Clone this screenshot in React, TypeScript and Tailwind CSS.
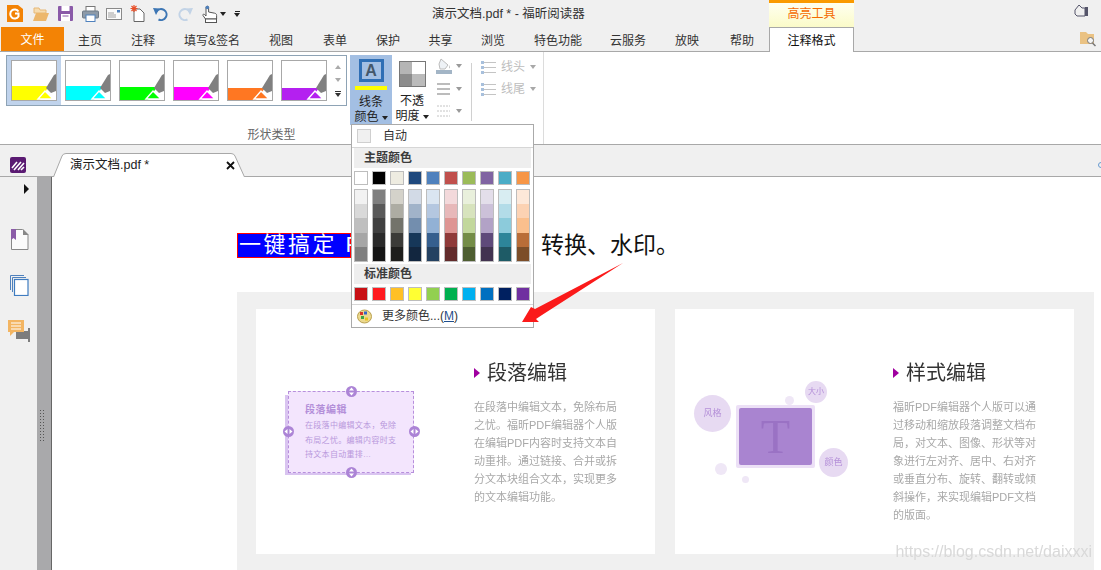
import type { ReactNode } from "react";

const tabs = [
  { label: "主页", w: "w-[52px]" },
  { label: "注释", w: "w-[54px]" },
  { label: "填写&签名", w: "w-[84px]" },
  { label: "视图", w: "w-[54px]" },
  { label: "表单", w: "w-[54px]" },
  { label: "保护", w: "w-[52px]" },
  { label: "共享", w: "w-[53px]" },
  { label: "浏览", w: "w-[52px]" },
  { label: "特色功能", w: "w-[78px]" },
  { label: "云服务", w: "w-[62px]" },
  { label: "放映", w: "w-[56px]" },
  { label: "帮助", w: "w-[54px]" },
];

const thumbs = [
  { color: "#ffff00", top: 25 },
  { color: "#00ffff", top: 25 },
  { color: "#00ff00", top: 26 },
  { color: "#ff00ff", top: 26 },
  { color: "#ff7722", top: 27 },
  { color: "#b420f0", top: 27 },
];

const themeColors = ["#ffffff", "#000000", "#eeece1", "#1f497d", "#4f81bd", "#c0504d", "#9bbb59", "#8064a2", "#4bacc6", "#f79646"];

const ramps = [
  ["#f2f2f2", "#d9d9d9", "#bfbfbf", "#a6a6a6", "#808080"],
  ["#7f7f7f", "#595959", "#404040", "#2a2a2a", "#151515"],
  ["#d4d2ca", "#adaca3", "#73736b", "#3b3b38", "#1e1e1c"],
  ["#d2dae6", "#a1b3c9", "#738eae", "#163759", "#12263f"],
  ["#dae5f1", "#b4c7e0", "#92b1d5", "#365f8e", "#244161"],
  ["#f3d9db", "#e7b8b9", "#de9593", "#8f3a39", "#622b2b"],
  ["#e9f0dc", "#d7e3bd", "#c2d79c", "#748c47", "#4e5e31"],
  ["#e3deea", "#ccc1d9", "#b2a2c6", "#5f4a7a", "#423350"],
  ["#d8edf2", "#b3dce8", "#8ccbdb", "#2d8599", "#1e5b66"],
  ["#fde8d9", "#fcd2b3", "#fabf8d", "#b96d38", "#7c4d28"],
];

const standardColors = ["#c81015", "#ff1a1f", "#ffc025", "#ffff33", "#92d050", "#00b050", "#00b0f0", "#0070c0", "#002060", "#7030a0"];

const Caret = ({ color = "border-t-[#333]" }: { color?: string }) => (
  <span className={`inline-block w-0 h-0 border-x-[3px] border-x-transparent border-t-[4px] ${color}`} />
);

const Thumb = ({ color, top }: { color: string; top: number }) => (
  <div className="w-[46px] h-[41px] bg-white border border-[#a8a8a8] shrink-0">
    <svg width="44" height="39" viewBox="0 0 44 39">
      <polygon points={`0,${top} 37,${top} 28,39 0,39`} fill={color} />
      <polygon points="26,38 33,30 41,38" fill={color} stroke="#fff" strokeWidth="1.4" />
      <polygon points="34,27 42,14 44,13 44,30 39,32" fill="#808080" />
    </svg>
  </div>
);

const Swatch = ({ color }: { color: string }) => (
  <div className="w-[14px] h-[14px] border border-[#bdbdbd]" style={{ backgroundColor: color }} />
);

const SectionTitle = ({ children }: { children: ReactNode }) => (
  <div className="h-[20px] bg-[#eeeeee] pl-[10px] text-[12px] leading-[20px] font-bold text-[#3c3c3c]">{children}</div>
);

const TitleIcons = () => (
  <div className="flex items-center w-[432px] h-full pl-[7px]">
    <svg width="16" height="17" viewBox="0 0 16 17" className="mr-[10px]">
      <path d="M0 0h11l5 4v13H0z" fill="#f38305" />
      <path d="M11.5 6.5a4.5 4.5 0 1 0 0 5V8.5H8" fill="none" stroke="#fff" strokeWidth="2" />
    </svg>
    <svg width="16" height="14" viewBox="0 0 16 14" className="mr-[9px]">
      <path d="M1 1h5l1 2h6v3H1z" fill="#f6dcb0" stroke="#e6b876" />
      <path d="M0 14l3-8h13l-3 8z" fill="#ecb76c" />
    </svg>
    <svg width="15" height="15" viewBox="0 0 15 15" className="mr-[9px]">
      <rect width="15" height="15" rx="1" fill="#8a5aa8" />
      <rect x="3.5" y="0" width="8" height="5" fill="#fff" />
      <rect x="3" y="8" width="9" height="7" fill="#fff" />
      <rect x="4.5" y="9.5" width="6" height="1" fill="#8a5aa8" />
    </svg>
    <svg width="17" height="16" viewBox="0 0 17 16" className="mr-[7px]">
      <rect x="4" y="0.5" width="9" height="5" fill="#fff" stroke="#777" />
      <rect x="0.5" y="5" width="16" height="7" rx="1" fill="#8d9aa8" stroke="#6f7a86" />
      <rect x="4" y="9" width="9" height="6.5" fill="#fff" stroke="#4f81bd" />
    </svg>
    <svg width="16" height="12" viewBox="0 0 16 12" className="mr-[8px]">
      <rect x="0.5" y="0.5" width="15" height="11" fill="#fbfbfb" stroke="#8a8a8a" />
      <rect x="11" y="2" width="3" height="2.5" fill="#4f81bd" />
      <path d="M2 5h6M2 7h8M2 9h8" stroke="#a0a0a0" />
    </svg>
    <svg width="15" height="17" viewBox="0 0 15 17" className="mr-[8px]">
      <path d="M4 4h6l4 4v8.500H4z" fill="#fff" stroke="#666" />
      <path d="M4 0v7M0.500 3.500h7M1.500 1l5 5M6.500 1l-5 5" stroke="#e8502a" strokeWidth="1.200" />
    </svg>
    <svg width="16" height="15" viewBox="0 0 16 15" className="mr-[8px]">
      <path d="M3.500 5.500a5.500 5.500 0 1 1 2 8" fill="none" stroke="#3d76b4" strokeWidth="2" />
      <polygon points="0,2 6.500,2.500 3,9" fill="#3d76b4" />
    </svg>
    <svg width="16" height="15" viewBox="0 0 16 15" className="mr-[9px]">
      <path d="M12.500 5.500a5.500 5.500 0 1 0-2 8" fill="none" stroke="#c2d3e6" strokeWidth="2" />
      <polygon points="16,2 9.500,2.500 13,9" fill="#c2d3e6" />
    </svg>
    <svg width="16" height="18" viewBox="0 0 16 18" className="mr-[2px]">
      <path d="M4 9V2.500a1.300 1.300 0 0 1 2.600 0V7l6 1.200c1.500.3 2 1 2 2.300V14H3.500L1 10.500c-.5-1 .8-2 1.600-1L4 11z" fill="#fff" stroke="#555" />
      <rect x="3.500" y="14" width="11" height="3.500" fill="#fff" stroke="#555" />
      <circle cx="5.300" cy="2.500" r="1.800" fill="#4f81bd" />
    </svg>
    <span className="mr-[8px] flex"><Caret color="border-t-[#222]" /></span>
    <span className="flex flex-col items-center gap-[1px]">
      <span className="w-[5px] h-px bg-[#222]" />
      <Caret color="border-t-[#222]" />
    </span>
  </div>
);

const ActionColumn = () => (
  <div className="ml-[6px] w-[28px] flex flex-col pt-[3px] gap-[7px]">
    <div className="flex items-center gap-[4px] h-[16px]">
      <svg width="16" height="16" viewBox="0 0 16 16">
        <path d="M5 1l7 6-3 4H4L3 6z" fill="#eef2f6" stroke="#bcbcbc" />
        <path d="M13 7c1 2 1.500 3 0 3.500z" fill="#bcbcbc" />
        <rect y="12" width="16" height="4" fill="#a3b5c6" />
      </svg>
      <Caret color="border-t-[#9a9a9a]" />
    </div>
    <div className="flex items-center gap-[4px] h-[15px]">
      <svg width="16" height="12" viewBox="0 0 16 12">
        <rect y="0" width="13" height="2" x="1" fill="#bcbcbc" />
        <rect y="5" width="13" height="2" x="1" fill="#bcbcbc" />
        <rect y="10" width="13" height="2" x="1" fill="#bcbcbc" />
      </svg>
      <Caret color="border-t-[#9a9a9a]" />
    </div>
    <div className="flex items-center gap-[4px] h-[15px]">
      <svg width="16" height="12" viewBox="0 0 16 12">
        <path d="M1 1h13M1 6h13M1 11h13" stroke="#c4c4c4" strokeDasharray="2 1" />
      </svg>
      <Caret color="border-t-[#9a9a9a]" />
    </div>
  </div>
);

const LineEnd = ({ label }: { label: string }) => (
  <div className="flex items-center h-[22px] text-[12px] text-[#bdbdbd]">
    <svg width="16" height="13" viewBox="0 0 16 13" className="mr-[4px]">
      <path d="M3 1.500h12M3 6.500h12M3 11.500h12" stroke="#c4c4c4" />
      <rect x="0" y="0" width="3" height="3" fill="#a8c0dc" />
      <rect x="0" y="5" width="3" height="3" fill="#a8c0dc" />
      <rect x="0" y="10" width="3" height="3" fill="#a8c0dc" />
    </svg>
    <span className="w-[29px]">{label}</span>
    <Caret color="border-t-[#a8a8a8]" />
  </div>
);

const Ribbon = () => (
  <div className="h-[93px] bg-white border-b border-[#a8a8a8] flex">
    <div className="w-[544px] border-r border-[#dcdcdc] flex flex-col">
      <div className="flex h-[73px] pt-[3px]">
        <div className="ml-[6px] w-[341px] h-[51px] border border-[#8ea3b5] flex items-center">
          <div className="bg-[#c0d3ec] h-full w-[54px] flex items-center justify-center shrink-0">
            <Thumb {...thumbs[0]} />
          </div>
          <div className="flex gap-[8px] ml-[4px]">
            {thumbs.slice(1).map((thumb) => (
              <Thumb key={thumb.color} {...thumb} />
            ))}
          </div>
          <div className="ml-[6px] flex flex-col items-center gap-[9px] w-[10px]">
            <span className="w-0 h-0 border-x-[3px] border-x-transparent border-b-[4px] border-b-[#aaa]" />
            <Caret color="border-t-[#aaa]" />
            <span className="flex flex-col items-center gap-[1px]">
              <span className="w-[6px] h-px bg-[#333]" />
              <Caret color="border-t-[#333]" />
            </span>
          </div>
        </div>
        <div className="ml-[3px] w-[42px] h-[70px] bg-[#a3bfe3] flex flex-col items-center pt-[4px] text-[12px] leading-[15px] text-[#222]">
          <div className="w-[25px] h-[23px] border-[3px] border-[#2f6fb5] flex items-center justify-center text-[16px] font-bold text-[#44576a] font-['Liberation_Sans',sans-serif]">
            A
          </div>
          <div className="w-[32px] h-[4px] bg-[#ffff00] mt-[4px] mb-[5px]" />
          <span>线条</span>
          <span className="flex items-center gap-[3px]">颜色<Caret color="border-t-[#222]" /></span>
        </div>
        <div className="ml-[2px] w-[36px] flex flex-col items-center pt-[6px] text-[12px] leading-[15px] text-[#222]">
          <div className="w-[27px] h-[26px] border border-[#777] grid grid-cols-2 grid-rows-2 mb-[7px]">
            <div className="bg-[#b5b5b5]" />
            <div className="bg-white" />
            <div className="bg-[#8c8c8c]" />
            <div className="bg-[#bbbbbb]" />
          </div>
          <span>不透</span>
          <span className="flex items-center gap-[3px]">明度<Caret color="border-t-[#222]" /></span>
        </div>
        <ActionColumn />
        <div className="ml-[7px] mt-[8px] h-[58px] w-px bg-[#d0d0d0]" />
        <div className="ml-[9px] flex flex-col pt-[1px]">
          <LineEnd label="线头" />
          <LineEnd label="线尾" />
        </div>
      </div>
      <div className="text-center text-[12px] leading-[21px] text-[#666]">形状类型</div>
    </div>
  </div>
);

const TabStrip = () => (
  <div className="h-[32px] bg-[#f0f0f0] border-b border-[#a8a8a8] flex items-end relative">
    <svg width="16" height="16" viewBox="0 0 16 16" className="ml-[10px] mb-[3px] shrink-0">
      <rect width="16" height="16" rx="2" fill="#5a1a72" />
      <path d="M2 11l5-6M4 13l7-8M8 13l6-7M11 13l3-3" stroke="#fff" strokeWidth="1.600" />
    </svg>
    <div className="relative ml-[27px] w-[192px] h-[24px] flex items-center text-[12.500px] text-[#222] pl-[17px] -mb-px">
      <svg width="192" height="24" viewBox="0 0 192 24" className="absolute left-0 top-0">
        <path d="M0.500 24L9 3Q10 0.500 13 0.500H178Q181 0.500 182 3L191.500 24" fill="#fff" stroke="#a8a8a8" />
      </svg>
      <span className="relative">演示文档.pdf *</span>
      <svg width="9" height="9" viewBox="0 0 9 9" className="absolute left-[173px] top-[8px]">
        <path d="M1 1l7 7M8 1l-7 7" stroke="#111" strokeWidth="1.800" />
      </svg>
    </div>
    <div className="absolute right-[-3px] top-[17px] w-[6px] h-[6px] rounded-full border border-[#6a9bd0]" />
  </div>
);

const Sidebar = () => (
  <div className="w-[37px] bg-[#f0f0f0] flex flex-col items-start shrink-0">
    <span className="ml-[24px] mt-[7px] w-0 h-0 border-y-[5px] border-y-transparent border-l-[5px] border-l-[#111]" />
    <svg width="18" height="21" viewBox="0 0 18 21" className="ml-[11px] mt-[35px]">
      <path d="M0.500 0.500h11l5.500 5.500v14.500H0.500z" fill="#fbfbfb" stroke="#888" />
      <path d="M12 0l6 6h-6z" fill="#888" />
      <path d="M0 0h5v11l-2.500-2-2.500 2z" fill="#8b5ca8" />
    </svg>
    <svg width="19" height="21" viewBox="0 0 19 21" className="ml-[10px] mt-[25px]">
      <path d="M0.500 15V0.500H14M2.500 17V2.500H16" fill="none" stroke="#4f81bd" />
      <rect x="4.500" y="4.500" width="13.500" height="16" fill="#fff" stroke="#3f7cc0" strokeWidth="1.200" />
    </svg>
    <svg width="22" height="22" viewBox="0 0 22 22" className="ml-[8px] mt-[24px]">
      <path d="M8 11h12V8h2v14h-2v-3H8z" fill="#7d7d7d" />
      <path d="M0 0h16v12H6l-4 4v-4H0z" fill="#f3b562" />
      <path d="M3 3h10M3 6h10M3 9h10" stroke="#fff" />
    </svg>
  </div>
);

const Splitter = () => (
  <div className="w-[15px] bg-[#a9a9ab] border-r border-[#666] shrink-0 flex flex-col pt-[233px] pl-[3px]">
    <div className="grid grid-cols-2 gap-x-[2px] gap-y-[2px] w-[4px]">
      {Array.from({ length: 22 }).map((_, i) => (
        <span key={i} className="w-px h-px bg-[#555]" />
      ))}
    </div>
  </div>
);

const CardText = ({ title, lines }: { title: string; lines: string[] }) => (
  <div className="pt-[51px]">
    <div className="flex items-center h-[26px]">
      <span className="w-0 h-0 border-y-[5px] border-y-transparent border-l-[6px] border-l-[#a000a0] mr-[7px]" />
      <span className="text-[20px] leading-[26px] text-[#333]">{title}</span>
    </div>
    <div className="mt-[12px] text-[11px] leading-[18px] text-[#a8a8a8] whitespace-nowrap">
      {lines.map((line) => (
        <div key={line}>{line}</div>
      ))}
    </div>
  </div>
);

const Handle = ({ pos, vertical }: { pos: string; vertical: boolean }) => (
  <span className={`absolute w-[11px] h-[11px] rounded-full bg-[#ac84d6] flex items-center justify-center ${pos}`}>
    <svg width="9" height="9" viewBox="0 0 9 9" className={vertical ? "" : "rotate-90"}>
      <polygon points="4.500,0.500 7,3.500 2,3.500" fill="#fff" />
      <polygon points="4.500,8.500 7,5.500 2,5.500" fill="#fff" />
    </svg>
  </span>
);

// paragraph box drawn on the card, offsets are the drawing itself
const ParagraphArt = () => (
  <div className="relative w-[218px] h-full shrink-0">
    <div className="absolute left-[29px] top-[86px] w-[126px] h-[80px] bg-[#d9c4f0]" />
    <div className="absolute left-[32px] top-[82px] w-[126px] h-[82px] bg-[#f3e5fd] border border-dashed border-[#b78fdc] pl-[16px] pt-[10px]">
      <div className="text-[10px] leading-[15px] font-bold tracking-[0.5px] text-[#b38fd9]">段落编辑</div>
      <div className="mt-[2px] text-[8px] leading-[14.500px] tracking-[0.3px] text-[#b999dc] whitespace-nowrap">
        <div>在段落中编辑文本，免除</div>
        <div>布局之忧。编辑内容时支</div>
        <div>持文本自动重排…</div>
      </div>
    </div>
    <Handle pos="left-[90px] top-[77px]" vertical />
    <Handle pos="left-[90px] top-[158px]" vertical />
    <Handle pos="left-[27px] top-[117px]" vertical={false} />
    <Handle pos="left-[153px] top-[117px]" vertical={false} />
  </div>
);

const StyleArt = () => (
  <div className="relative w-[218px] h-full shrink-0">
    <div className="absolute left-[19px] top-[86px] w-[37px] h-[37px] rounded-full bg-[#e7daf2] flex items-center justify-center text-[9px] text-[#b48fd8]">风格</div>
    <div className="absolute left-[130px] top-[72px] w-[22px] h-[22px] rounded-full bg-[#e7daf2] flex items-center justify-center text-[8px] text-[#b48fd8]">大小</div>
    <div className="absolute left-[110px] top-[87px] w-[9px] h-[9px] rounded-full bg-[#efe7f6]" />
    <div className="absolute left-[144px] top-[139px] w-[29px] h-[29px] rounded-full bg-[#e7daf2] flex items-center justify-center text-[9px] text-[#b48fd8]">颜色</div>
    <div className="absolute left-[40px] top-[154px] w-[12px] h-[12px] rounded-full bg-[#efe7f6]" />
    <div className="absolute left-[67px] top-[167px] w-[7px] h-[7px] rounded-full bg-[#efe7f6]" />
    <div className="absolute left-[61px] top-[96px] w-[79px] h-[63px] bg-[#ece0f6] rounded-[2px] p-[3px]">
      <div className="w-full h-full bg-[#a984d0] rounded-[2px] flex items-center justify-center text-[48px] leading-none text-[#9a72c4] font-['Liberation_Serif',serif]">T</div>
    </div>
  </div>
);

const ColorMenu = () => (
  <div className="absolute left-[351px] top-[124px] w-[183px] h-[204px] bg-white border border-[#aaaaaa] flex flex-col z-10">
    <div className="h-[23px] flex items-center pl-[5px] text-[12px] text-[#333] border-b border-[#d6d6d6] shrink-0">
      <div className="w-[14px] h-[14px] bg-[#f0f0f0] border border-[#cfcfcf] mr-[12px]" />
      自动
    </div>
    <div className="px-[2px] flex flex-col flex-1">
      <SectionTitle>主题颜色</SectionTitle>
      <div className="flex gap-[4px] mt-[3px]">
        {themeColors.map((color) => (
          <Swatch key={color} color={color} />
        ))}
      </div>
      <div className="flex gap-[4px] mt-[4px]">
        {ramps.map((ramp) => (
          <div key={ramp[0]} className="w-[14px] h-[73px] border border-[#bdbdbd] flex flex-col">
            {ramp.map((color) => (
              <div key={color} className="flex-1" style={{ backgroundColor: color }} />
            ))}
          </div>
        ))}
      </div>
      <div className="mt-[2px]">
        <SectionTitle>标准颜色</SectionTitle>
      </div>
      <div className="flex gap-[4px] mt-[3px]">
        {standardColors.map((color) => (
          <Swatch key={color} color={color} />
        ))}
      </div>
    </div>
    <div className="h-[23px] border-t border-[#d6d6d6] flex items-center pl-[5px] text-[12px] text-[#333] shrink-0">
      <svg width="15" height="15" viewBox="0 0 15 15" className="mr-[10px]">
        <ellipse cx="7.500" cy="7.500" rx="7" ry="6.500" fill="#ecd98f" stroke="#b9a04e" />
        <rect x="3" y="3" width="3" height="3" fill="#d8352a" />
        <rect x="7" y="2.500" width="3" height="3" fill="#3465c8" />
        <rect x="4" y="7" width="3" height="3" fill="#3aa545" />
        <rect x="8" y="8.500" width="3" height="3" fill="#e7c420" />
      </svg>
      更多颜色...(<span className="underline text-[#1f4e8c]">M</span>)
    </div>
  </div>
);

const App = () => {
  return (
    <div className="relative w-full h-[570px] overflow-hidden flex flex-col bg-white font-['Liberation_Sans','Noto_Sans_CJK_SC',sans-serif]">
      {/* Title bar */}
      <div className="h-[27px] bg-[#f0f0f0] flex shrink-0">
        <TitleIcons />
        <div className="w-[337px] text-[12.500px] leading-[29px] text-[#333]">演示文档.pdf * - 福昕阅读器</div>
        <div className="w-[85px] border-t-[3px] border-[#fa9a00] bg-gradient-to-b from-[#fffff0] to-[#fbfbc8] text-center text-[12px] leading-[23px] text-[#f56b00]">
          高亮工具
        </div>
        <div className="flex-1 flex justify-end pr-[12px] pt-[4px]">
          <svg width="15" height="13" viewBox="0 0 15 13">
            <path d="M1 6l4-5 3 3h3v8H3L1 10z" fill="none" stroke="#55556a" />
            <rect x="11" y="3" width="3" height="9" fill="#55556a" />
          </svg>
        </div>
      </div>

      {/* Menu tabs */}
      <div className="h-[25px] bg-[#f0f0f0] border-b border-[#a8a8a8] flex shrink-0 text-[12px] text-[#333]">
        <div className="ml-px w-[63px] h-[24px] bg-[#f38305] text-white text-center leading-[27px]">文件</div>
        {tabs.map((tab) => (
          <div key={tab.label} className={`${tab.w} text-center leading-[29px]`}>
            {tab.label}
          </div>
        ))}
        <div className="w-[85px] h-[25px] bg-white border-x border-t border-[#a8a8a8] text-center text-[#111] leading-[26px]">注释格式</div>
        <div className="flex-1 flex justify-end pr-[5px] pt-[5px]">
          <svg width="16" height="15" viewBox="0 0 16 15">
            <path d="M0 0h6l2 2h6v10H0z" fill="#eac283" />
            <circle cx="10.500" cy="8.500" r="3" fill="#f5f5f5" stroke="#777" />
            <path d="M12.500 11l3 3" stroke="#777" strokeWidth="1.500" />
          </svg>
        </div>
      </div>

      <Ribbon />
      <TabStrip />

      <div className="flex-1 flex min-h-0">
        <Sidebar />
        <Splitter />

        {/* Document page */}
        <div className="flex-1 flex flex-col pl-[185px] pr-[7px] pt-[56px] min-w-0">
          <div className="flex items-center h-[25px] text-[23px] text-[#111] whitespace-nowrap">
            <div className="w-[114px] h-[25px] bg-[#0000ff] border border-[#ff0000] text-white leading-[22px] pl-px text-[22px] tracking-[2.5px]">
              一键搞定 P
            </div>
            <div className="ml-[190px]">转换、水印。</div>
          </div>
          <div className="mt-[34px] flex-1 bg-[#f0f0f0] pl-[19px] pt-[17px]">
            <div className="flex gap-[20px] h-[245px] blur-[0.3px]">
              <div className="w-[399px] bg-white flex">
                <ParagraphArt />
                <CardText
                  title="段落编辑"
                  lines={[
                    "在段落中编辑文本，免除布局",
                    "之忧。福昕PDF编辑器个人版",
                    "在编辑PDF内容时支持文本自",
                    "动重排。通过链接、合并或拆",
                    "分文本块组合文本，实现更多",
                    "的文本编辑功能。",
                  ]}
                />
              </div>
              <div className="w-[399px] bg-white flex">
                <StyleArt />
                <CardText
                  title="样式编辑"
                  lines={[
                    "福昕PDF编辑器个人版可以通",
                    "过移动和缩放段落调整文档布",
                    "局，对文本、图像、形状等对",
                    "象进行左对齐、居中、右对齐",
                    "或垂直分布、旋转、翻转或倾",
                    "斜操作，来实现编辑PDF文档",
                    "的版面。",
                  ]}
                />
              </div>
            </div>
          </div>
        </div>
      </div>

      <ColorMenu />

      {/* Annotation arrow */}
      <svg width="1101" height="570" viewBox="0 0 1101 570" className="absolute left-0 top-0 z-20 pointer-events-none">
        <polygon points="623,263 535,309 531,307 522,322 539,322 536,319 542,315" fill="#fb1a1a" />
      </svg>

      <div className="absolute right-[9px] bottom-[8px] z-20 text-[16px] leading-[20px] text-[#d9d9d9]">
        https://blog.csdn.net/daixxxi
      </div>
    </div>
  );
};

export default App;
